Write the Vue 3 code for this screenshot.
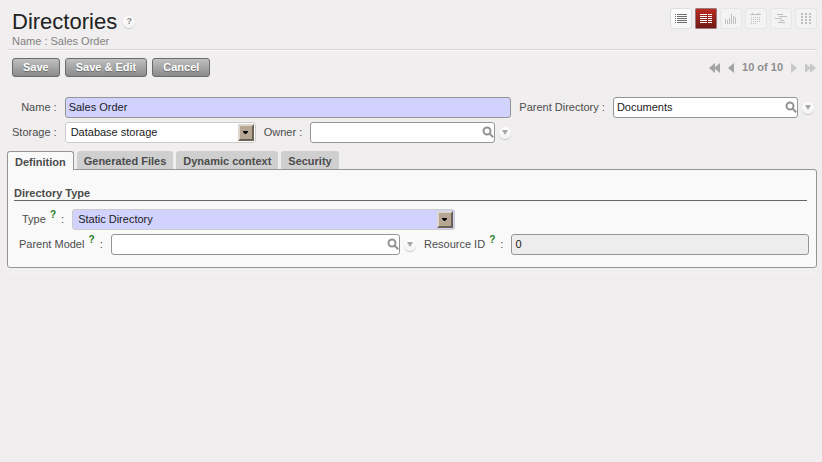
<script setup>
import { ref } from 'vue'

const views = [
  { id: 'list', label: 'List view' },
  { id: 'form', label: 'Form view' },
  { id: 'graph', label: 'Graph view' },
  { id: 'calendar', label: 'Calendar view' },
  { id: 'gantt', label: 'Gantt view' },
  { id: 'kanban', label: 'Kanban view' },
]
const tabs = ['Definition', 'Generated Files', 'Dynamic context', 'Security']
const activeTab = ref('Definition')

const name = ref('Sales Order')
const parentDirectory = ref('Documents')
const storage = ref('Database storage')
const owner = ref('')
const type = ref('Static Directory')
const parentModel = ref('')
const resourceId = ref('0')
</script>

<template>
  <main class="page">
    <header class="header">
      <div class="heading">
        <div class="title-line">
          <h1>Directories</h1>
          <a class="round help" href="#help" aria-label="Help">?</a>
        </div>
        <p class="subtitle">Name : Sales Order</p>
      </div>
      <nav class="views" aria-label="Views">
        <button
          v-for="v in views"
          :key="v.id"
          type="button"
          class="view"
          :class="v.id"
          :aria-label="v.label"
        >
          <svg v-if="v.id === 'list'" width="12" height="11" viewBox="0 0 12 11" shape-rendering="crispEdges">
            <path d="M0 1.5h1M2 1.5h10M0 3.5h1M2 3.5h10M0 5.5h1M2 5.5h10M0 7.5h1M2 7.5h10M0 9.5h1M2 9.5h10" />
          </svg>
          <svg v-else-if="v.id === 'form'" width="12" height="11" viewBox="0 0 12 11" shape-rendering="crispEdges">
            <path d="M0 1.5h7M8 1.5h4M0 3.5h7M8 3.5h4M0 5.5h7M8 5.5h4M0 7.5h7M8 7.5h4M0 9.5h7M8 9.5h4" />
          </svg>
          <svg v-else-if="v.id === 'graph'" width="12" height="11" viewBox="0 0 12 11" shape-rendering="crispEdges">
            <path d="M.5 6v5M2.5 7v4M4.5 5v6M6.5 1v10M8.5 3v8M10.5 4v7" />
          </svg>
          <svg v-else-if="v.id === 'calendar'" width="12" height="11" viewBox="0 0 12 11" shape-rendering="crispEdges">
            <path d="M2 .5h1M8 .5h1M0 1.5h11M1 4.5h1M3 4.5h1M5 4.5h1M7 4.5h1M9 4.5h1M1 6.5h1M3 6.5h1M5 6.5h1M7 6.5h1M9 6.5h1M1 8.5h1M3 8.5h1M5 8.5h1M7 8.5h1M9 8.5h1M1 10.5h1M3 10.5h1M5 10.5h1" />
          </svg>
          <svg v-else-if="v.id === 'gantt'" width="12" height="11" viewBox="0 0 12 11" shape-rendering="crispEdges">
            <path d="M2 1.5h6M4 3.5h8M0 5.5h7M5 7.5h4M3 9.5h7" />
          </svg>
          <svg v-else width="12" height="11" viewBox="0 0 12 11" shape-rendering="crispEdges">
            <path class="dots" d="M1 1h2M5 1h2M9 1h2M1 4h2M5 4h2M9 4h2M1 7h2M5 7h2M9 7h2M1 10h2M5 10h2M9 10h2" />
          </svg>
        </button>
      </nav>
    </header>

    <div class="toolbar">
      <div class="actions">
        <button type="button" class="action">Save</button>
        <button type="button" class="action">Save &amp; Edit</button>
        <button type="button" class="action">Cancel</button>
      </div>
      <nav class="pager" aria-label="Records">
        <a href="#first" aria-label="First">
          <svg width="11" height="10" viewBox="0 0 11 10"><path d="M6 0v10L0 5zM11 0v10L5 5z" /></svg>
        </a>
        <a href="#previous" aria-label="Previous">
          <svg width="6" height="10" viewBox="0 0 6 10"><path d="M6 0v10L0 5z" /></svg>
        </a>
        <span>10 of 10</span>
        <a class="faded" href="#next" aria-label="Next">
          <svg width="6" height="10" viewBox="0 0 6 10"><path d="M0 0v10l6-5z" /></svg>
        </a>
        <a class="faded" href="#last" aria-label="Last">
          <svg width="11" height="10" viewBox="0 0 11 10"><path d="M0 0v10l6-5zM5 0v10l6-5z" /></svg>
        </a>
      </nav>
    </div>

    <form class="fields" @submit.prevent>
      <label for="name">Name :</label>
      <input id="name" v-model="name" class="box required wide" type="text" />
      <label for="parent-directory">Parent Directory :</label>
      <div class="lookup">
        <div class="search">
          <input id="parent-directory" v-model="parentDirectory" class="box" type="text" />
          <button type="button" aria-label="Search parent directory">
            <svg width="12" height="12" viewBox="0 0 12 12"><circle cx="5" cy="5" r="3.5" /><path d="M7.5 7.5l3.7 3.7" /></svg>
          </button>
        </div>
        <button type="button" class="round" aria-label="Parent directory actions">
          <svg width="6" height="5" viewBox="0 0 6 5"><path d="M0 0h6L3 5z" /></svg>
        </button>
      </div>

      <label for="storage">Storage :</label>
      <div class="choice">
        <select id="storage" v-model="storage" class="box">
          <option>Database storage</option>
        </select>
        <span class="drop"><svg width="5" height="3" viewBox="0 0 5 3"><path d="M0 0h5v1L3 3H2L0 1z" /></svg></span>
      </div>
      <label for="owner">Owner :</label>
      <div class="lookup">
        <div class="search">
          <input id="owner" v-model="owner" class="box" type="text" />
          <button type="button" aria-label="Search owner">
            <svg width="12" height="12" viewBox="0 0 12 12"><circle cx="5" cy="5" r="3.5" /><path d="M7.5 7.5l3.7 3.7" /></svg>
          </button>
        </div>
        <button type="button" class="round" aria-label="Owner actions">
          <svg width="6" height="5" viewBox="0 0 6 5"><path d="M0 0h6L3 5z" /></svg>
        </button>
      </div>
    </form>

    <div class="tabs" role="tablist">
      <button
        v-for="t in tabs"
        :key="t"
        type="button"
        role="tab"
        class="tab"
        :class="{ active: t === activeTab }"
        :aria-selected="t === activeTab"
        @click="activeTab = t"
      >{{ t }}</button>
    </div>

    <section class="panel">
      <h2>Directory Type</h2>
      <div class="row type-row">
        <label for="type">Type <sup>?</sup> :</label>
        <div class="choice">
          <select id="type" v-model="type" class="box required">
            <option>Static Directory</option>
          </select>
          <span class="drop"><svg width="5" height="3" viewBox="0 0 5 3"><path d="M0 0h5v1L3 3H2L0 1z" /></svg></span>
        </div>
      </div>
      <div class="row">
        <label for="parent-model">Parent Model <sup>?</sup> :</label>
        <div class="lookup">
          <div class="search">
            <input id="parent-model" v-model="parentModel" class="box" type="text" />
            <button type="button" aria-label="Search parent model">
              <svg width="12" height="12" viewBox="0 0 12 12"><circle cx="5" cy="5" r="3.5" /><path d="M7.5 7.5l3.7 3.7" /></svg>
            </button>
          </div>
          <button type="button" class="round" aria-label="Parent model actions">
            <svg width="6" height="5" viewBox="0 0 6 5"><path d="M0 0h6L3 5z" /></svg>
          </button>
        </div>
        <label for="resource-id">Resource ID <sup>?</sup> :</label>
        <input id="resource-id" v-model="resourceId" class="box readonly" type="text" readonly />
      </div>
    </section>
    <hr />
  </main>
</template>

<style>
body {
  background: #f0eeee;
}
</style>

<style scoped>
.page {
  padding: 8px 5px 8px 7px;
  font-family: "Liberation Sans", Arial, sans-serif;
  font-size: 11px;
  line-height: 13px;
  color: #4c4c4c;
}
.page * {
  box-sizing: border-box;
}
button,
input,
select {
  margin: 0;
  font-family: inherit;
  font-size: 11px;
}
button {
  padding: 0;
  border: 0;
  background: none;
}
svg {
  display: block;
}

.header {
  display: flex;
  justify-content: space-between;
  align-items: flex-start;
  padding-left: 5px;
  height: 42px;
  border-bottom: 1px solid #d4d2d2;
  box-shadow: 0 1px 0 #fbfbfb;
}
.title-line {
  display: flex;
  align-items: center;
  gap: 6px;
}
h1 {
  margin: 0;
  font-size: 22px;
  font-weight: normal;
  line-height: 27px;
  color: #222;
}
.subtitle {
  margin: 0;
  color: #828282;
}
.round {
  display: flex;
  flex: none;
  align-items: center;
  justify-content: center;
  width: 12px;
  height: 12px;
  border-radius: 50%;
  background: linear-gradient(#fdfdfd, #f3f3f3);
  box-shadow: 0 1px 1px #c8c8c8;
}
.round path {
  fill: #a6a6a6;
}
.help {
  font-size: 9px;
  font-weight: bold;
  color: #8a8a8a;
  text-decoration: none;
}

.views {
  display: flex;
  gap: 3px;
}
.view {
  display: flex;
  align-items: center;
  justify-content: center;
  width: 22px;
  height: 21px;
  border: 1px solid #e7e5e5;
  border-radius: 3px;
  background: #f4f3f3;
}
.view path {
  fill: none;
  stroke: #c0c0c0;
  stroke-width: 1;
}
.view .dots {
  stroke-width: 2;
}
.view.list {
  border-color: #dedede;
  background: linear-gradient(#fff, #f6f6f6);
}
.view.list path {
  stroke: #6e6e6e;
}
.view.form {
  border: 1px solid #9b7c7a;
  border-radius: 1px;
  background: linear-gradient(#b92b21, #701a16);
}
.view.form path {
  stroke: #fff;
}

.toolbar {
  display: flex;
  justify-content: space-between;
  align-items: center;
  padding: 8px 1px 0 5px;
}
.actions {
  display: flex;
  gap: 5px;
}
.action {
  height: 19px;
  padding: 0 10px;
  border: 1px solid #6b6b6b;
  border-radius: 3px;
  background: linear-gradient(#c0c0c0, #8b8b8b);
  color: #fff;
  font-weight: bold;
  line-height: 17px;
  text-shadow: 0 1px 1px #666;
}
.pager {
  display: flex;
  align-items: center;
  gap: 8px;
  font-weight: bold;
  color: #8f8f8f;
}
.pager path {
  fill: #a3a3a3;
}
.pager .faded path {
  fill: #c8c8c8;
}

.fields {
  display: grid;
  grid-template-columns: auto 19fr auto 20fr auto 20fr;
  align-items: center;
  gap: 4px 8px;
  padding: 20px 3px 0 5px;
}
.fields label {
  text-align: right;
  white-space: nowrap;
}
.wide {
  grid-column: span 3;
}
.box {
  display: block;
  width: 100%;
  min-width: 0;
  height: 21px;
  padding: 0 3px 2px;
  border: 1px solid #959595;
  border-radius: 3px;
  background: #fff;
  color: #1a1a1a;
  outline: none;
}
.box.required {
  background: #d2d2ff;
}
.box.readonly {
  background: #ededed;
}
.lookup {
  display: flex;
  align-items: center;
  gap: 4px;
}
.search {
  position: relative;
  flex: 1;
}
.search .box {
  padding-right: 18px;
}
.search button {
  position: absolute;
  top: 4px;
  right: 1px;
}
.search circle,
.search path {
  fill: none;
  stroke: #939393;
  stroke-width: 2;
}
.choice {
  position: relative;
}
.choice .box {
  appearance: none;
  padding: 0 20px 2px 5px;
  border-color: #ccc;
}
.drop {
  position: absolute;
  top: 2px;
  right: 2px;
  display: flex;
  align-items: center;
  justify-content: center;
  width: 16px;
  height: 17px;
  border: 2px solid;
  border-color: #ddd6cf #6d6154 #6d6154 #ddd6cf;
  background: #b5a794;
  pointer-events: none;
}

.tabs {
  display: flex;
  align-items: flex-end;
  gap: 3px;
  padding-top: 8px;
}
.tab {
  height: 18px;
  padding: 2px 7px 0;
  border-radius: 3px 3px 0 0;
  background: #cfcfcf;
  color: #4c4c4c;
  font-weight: bold;
  line-height: 13px;
}
.tab.active {
  position: relative;
  height: 19px;
  margin-bottom: -1px;
  border: 1px solid #959595;
  border-bottom: 0;
  background: #f9f9f9;
}
.panel {
  padding: 17px 7px 12px 6px;
  border: 1px solid #959595;
  border-radius: 0 3px 3px 3px;
  background: #f9f9f9;
}
h2 {
  margin: 0 2px 8px 0;
  border-bottom: 1px solid #666;
  font-size: 11px;
  line-height: 13px;
}
.row {
  display: flex;
  align-items: center;
  gap: 8px;
  padding-left: 5px;
}
.row + .row {
  margin-top: 4px;
}
.row label {
  flex: none;
  white-space: pre;
}
.row .lookup {
  flex: 39 1 0;
}
.row > .box {
  flex: 37 1 0;
}
.type-row {
  padding-left: 8px;
}
.type-row .choice {
  flex: 21 1 0;
}
.type-row::after {
  content: "";
  flex: 19 1 0;
}
sup {
  margin: 0 2px 0 1px;
  font-size: 10px;
  font-weight: bold;
  line-height: 0;
  color: #1f7d1f;
}
hr {
  margin: 5px 0 0;
  border: 0;
  border-top: 1px solid #f5f3f3;
}
</style>
